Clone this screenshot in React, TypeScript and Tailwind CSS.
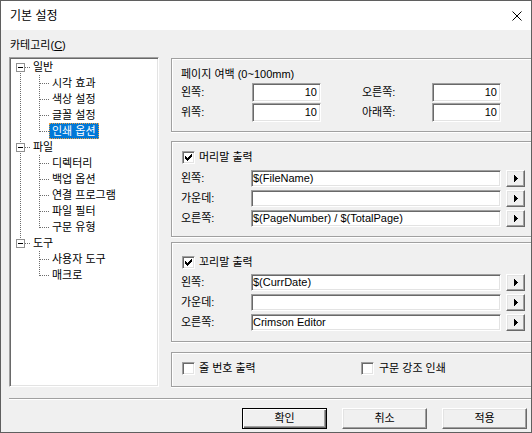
import React from 'react';

type Node = { label: string; children: string[] };

const TREE: Node[] = [
  { label: '일반', children: ['시각 효과', '색상 설정', '글꼴 설정', '인쇄 옵션'] },
  { label: '파일', children: ['디렉터리', '백업 옵션', '연결 프로그램', '파일 필터', '구문 유형'] },
  { label: '도구', children: ['사용자 도구', '매크로'] },
];

function vdots(x: number, y0: number, y1: number) {
  const r: React.ReactNode[] = [];
  for (let y = y0; y <= y1; y++) if (y % 2 === 0) r.push(<rect key={`v${x}-${y}`} x={x} y={y} width={1} height={1} />);
  return r;
}
function hdots(y: number, x0: number, x1: number) {
  const r: React.ReactNode[] = [];
  for (let x = x0; x <= x1; x++) if (x % 2 === 0) r.push(<rect key={`h${y}-${x}`} x={x} y={y} width={1} height={1} />);
  return r;
}

function Tree() {
  const rows: React.ReactNode[] = [];
  TREE.forEach((node, i) => {
    const first = i === 0;
    const last = i === TREE.length - 1;
    rows.push(
      <div key={node.label} className="flex h-[16px] items-center">
        <svg width="19" height="16" className="shrink-0 fill-[#6d6d6d]" shapeRendering="crispEdges">
          {!first && vdots(9, 0, 3)}
          {!last && vdots(9, 13, 15)}
          {hdots(8, 14, 18)}
          <rect x="5.5" y="4.5" width="8" height="8" fill="#fff" stroke="#919191" />
          <rect x="7" y="8" width="5" height="1" fill="#000" />
        </svg>
        <span className="pl-[3px] leading-[14px]">{node.label}</span>
      </div>
    );
    node.children.forEach((c, j) => {
      const lastChild = j === node.children.length - 1;
      const sel = c === '인쇄 옵션';
      rows.push(
        <div key={c} className="flex h-[16px] items-center">
          <svg width="19" height="16" className="shrink-0 fill-[#6d6d6d]" shapeRendering="crispEdges">
            {!last && vdots(9, 0, 15)}
          </svg>
          <svg width="19" height="16" className="shrink-0 fill-[#6d6d6d]" shapeRendering="crispEdges">
            {vdots(9, 0, 8)}
            {!lastChild && vdots(9, 9, 15)}
            {hdots(8, 10, 18)}
          </svg>
          {sel ? (
            <span className="flex h-[16px] items-center border border-dotted border-[#f0a040] bg-[#0078d7] px-[2px] leading-[14px] text-white">
              {c}
            </span>
          ) : (
            <span className="px-[3px] leading-[14px]">{c}</span>
          )}
        </div>
      );
    });
  });
  return (
    <div className="h-[330px] w-[150px] shrink-0 border border-b-white border-l-[#a0a0a0] border-r-white border-t-[#a0a0a0] bg-white pl-[1px] pt-[1px] shadow-[inset_1px_1px_0_#696969,inset_-1px_-1px_0_#e3e3e3]">
      {rows}
    </div>
  );
}

function Check({ checked }: { checked?: boolean }) {
  return (
    <span className="flex h-[13px] w-[13px] shrink-0 items-center justify-center border border-b-white border-l-[#a0a0a0] border-r-white border-t-[#a0a0a0] bg-white shadow-[inset_1px_1px_0_#696969,inset_-1px_-1px_0_#e3e3e3]">
      {checked && (
        <svg width="7" height="7" className="fill-black" shapeRendering="crispEdges">
          <path d="M0 2h1v3H0z M1 3h1v3H1z M2 4h1v3H2z M3 3h1v3H3z M4 2h1v3H4z M5 1h1v3H5z M6 0h1v3H6z" />
        </svg>
      )}
    </span>
  );
}

function Edit({ value, right, width }: { value: string; right?: boolean; width: string }) {
  return (
    <div
      className={
        (right ? 'justify-end pr-[3px] ' : 'justify-start pl-[1px] ') +
        width +
        ' flex h-full shrink-0 items-center overflow-hidden whitespace-nowrap border border-b-white border-l-[#a0a0a0] border-r-white border-t-[#a0a0a0] bg-white shadow-[inset_1px_1px_0_#696969,inset_-1px_-1px_0_#e3e3e3]'
      }
    >
      {value}
    </div>
  );
}

function ArrowBtn() {
  return (
    <div className="ml-[5px] flex h-full w-[19px] shrink-0 items-center justify-center border border-b-[#696969] border-l-white border-r-[#696969] border-t-white bg-[#f0f0f0] shadow-[inset_-1px_-1px_0_#a0a0a0,inset_1px_1px_0_#e3e3e3]">
      <svg width="4" height="7" className="fill-black" shapeRendering="crispEdges">
        <path d="M0 0h1v7H0z M1 1h1v5H1z M2 2h1v3H2z M3 3h1v1H3z" />
      </svg>
    </div>
  );
}

function FieldRows({ rows }: { rows: { label: string; value: string }[] }) {
  return (
    <div className="flex flex-col gap-[3px]">
      {rows.map((r) => (
        <div key={r.label} className="flex h-[17px] items-center pl-[9px]">
          <span className="w-[70px] shrink-0">{r.label}</span>
          <Edit value={r.value} width="w-[250px]" />
          <ArrowBtn />
        </div>
      ))}
    </div>
  );
}

function Button({ label, def }: { label: string; def?: boolean }) {
  return (
    <div
      className={
        def
          ? 'flex h-[21px] w-[85px] items-center justify-center border border-black bg-[#f0f0f0] shadow-[inset_1px_1px_0_#fff,inset_-1px_-1px_0_#696969,inset_-2px_-2px_0_#a0a0a0]'
          : 'flex h-[21px] w-[85px] items-center justify-center border border-b-[#696969] border-l-white border-r-[#696969] border-t-white bg-[#f0f0f0] shadow-[inset_-1px_-1px_0_#a0a0a0,inset_1px_1px_0_#e3e3e3]'
      }
    >
      {label}
    </div>
  );
}

export default function App() {
  return (
    <div className="flex h-[433px] w-[532px] flex-col overflow-hidden border border-[#5f5f5f] bg-[#f0f0f0] font-['Liberation_Sans','Noto_Sans_CJK_KR',sans-serif] text-[11px] leading-[13px] text-black">
      {/* title bar */}
      <div className="flex h-[29px] shrink-0 items-center justify-between bg-white pl-[9px] pr-[9px]">
        <span className="text-[12px] leading-[14px]">기본 설정</span>
        <svg width="10" height="10" viewBox="0 0 10 10" className="stroke-black">
          <path d="M0.5 0.5L9.5 9.5M9.5 0.5L0.5 9.5" strokeWidth="1" fill="none" />
        </svg>
      </div>

      <div className="flex flex-1 flex-col pl-[8px]">
        <div className="mt-[8px] h-[14px] pl-[1px] leading-[14px]">
          카테고리(<span className="underline">C</span>)
        </div>

        <div className="mt-[5px] flex h-[330px] gap-[12px]">
          <Tree />

          <div className="mt-[1px] flex flex-1 flex-col">
            {/* group 1 */}
            <div className="h-[74px] shrink-0 border border-r-0 border-[#a0a0a0] pt-[8px] shadow-[inset_1px_1px_0_#fff,0_1px_0_#fff]">
              <div className="h-[14px] pl-[9px] leading-[14px]">페이지 여백 (0~100mm)</div>
              <div className="mt-[2px] flex flex-col gap-[1px]">
                {[
                  ['왼쪽:', '오른쪽:'],
                  ['위쪽:', '아래쪽:'],
                ].map(([a, b]) => (
                  <div key={a} className="flex h-[19px] items-center pl-[9px]">
                    <span className="w-[71px] shrink-0">{a}</span>
                    <Edit value="10" right width="w-[69px]" />
                    <span className="ml-[41px] w-[70px] shrink-0">{b}</span>
                    <Edit value="10" right width="w-[69px]" />
                  </div>
                ))}
              </div>
            </div>

            {/* group 2 */}
            <div className="mt-[9px] h-[96px] shrink-0 border border-r-0 border-[#a0a0a0] pt-[9px] shadow-[inset_1px_1px_0_#fff,0_1px_0_#fff]">
              <div className="flex h-[13px] items-center pl-[10px]">
                <Check checked />
                <span className="ml-[4px] leading-[13px]">머리말 출력</span>
              </div>
              <div className="mt-[6px]">
                <FieldRows
                  rows={[
                    { label: '왼쪽:', value: '$(FileName)' },
                    { label: '가운데:', value: '' },
                    { label: '오른쪽:', value: '$(PageNumber) / $(TotalPage)' },
                  ]}
                />
              </div>
            </div>

            {/* group 3 */}
            <div className="mt-[5px] h-[100px] shrink-0 border border-r-0 border-[#a0a0a0] pt-[13px] shadow-[inset_1px_1px_0_#fff,0_1px_0_#fff]">
              <div className="flex h-[13px] items-center pl-[10px]">
                <Check checked />
                <span className="ml-[4px] leading-[13px]">꼬리말 출력</span>
              </div>
              <div className="mt-[5px]">
                <FieldRows
                  rows={[
                    { label: '왼쪽:', value: '$(CurrDate)' },
                    { label: '가운데:', value: '' },
                    { label: '오른쪽:', value: 'Crimson Editor' },
                  ]}
                />
              </div>
            </div>

            {/* group 4 */}
            <div className="mt-[10px] flex h-[35px] shrink-0 items-start border border-r-0 border-[#a0a0a0] pl-[10px] pt-[9px] shadow-[inset_1px_1px_0_#fff,0_1px_0_#fff]">
              <div className="flex h-[13px] w-[179px] items-center">
                <Check />
                <span className="ml-[4px] leading-[13px]">줄 번호 출력</span>
              </div>
              <div className="flex h-[13px] items-center">
                <Check />
                <span className="ml-[5px] leading-[13px]">구문 강조 인쇄</span>
              </div>
            </div>
          </div>
        </div>

        <div className="mt-[11px] h-[2px] border-b border-b-white bg-[#a0a0a0]" />

        <div className="mt-[8px] flex justify-end gap-[15px] pr-[4px]">
          <Button label="확인" def />
          <Button label="취소" />
          <Button label="적용" />
        </div>
      </div>
    </div>
  );
}
